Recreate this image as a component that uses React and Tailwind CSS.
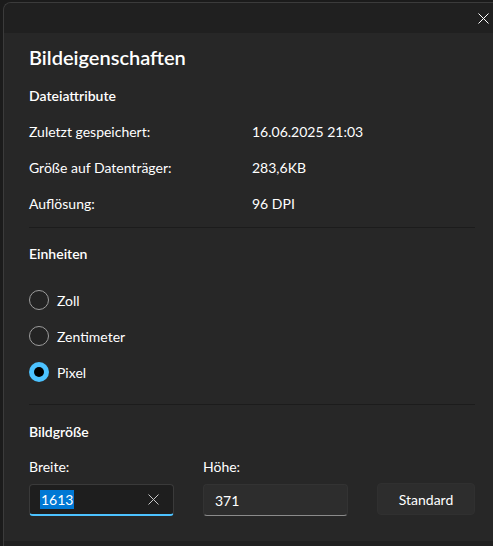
import React from 'react';

const attributes = [
  { label: 'Zuletzt gespeichert:', value: '16.06.2025 21:03' },
  { label: 'Größe auf Datenträger:', value: '283,6KB' },
  { label: 'Auflösung:', value: '96 DPI' },
];

const units = ['Zoll', 'Zentimeter', 'Pixel'];

const Radio = ({ label, checked }) => (
  <div className="flex items-center h-[36px] gap-[8px]">
    {checked ? (
      <span className="w-[20px] h-[20px] rounded-full bg-[#4cc2ff] flex items-center justify-center">
        <span className="w-[10px] h-[10px] rounded-full bg-black" />
      </span>
    ) : (
      <span className="w-[20px] h-[20px] rounded-full border border-[#9d9d9d] bg-[#232323]" />
    )}
    <span className="text-[14px] text-white">{label}</span>
  </div>
);

const App = () => {
  return (
    <div className="w-[493px] h-[546px] bg-[#1b1b1b] overflow-hidden font-['Lato',sans-serif] pt-[2px] pl-[3px]">
      {/* Dialogfenster */}
      <div className="w-[490px] h-[544px] rounded-tl-[8px] border-l border-t border-[#3b3b3b] bg-[#272727] overflow-hidden flex flex-col">
        {/* Titelleiste */}
        <div className="h-[30px] shrink-0 bg-[#202020] flex items-center justify-end pr-[4px]">
          <svg width="11" height="11" viewBox="0 0 11 11" className="text-white">
            <path d="M0.5 0.5L10.5 10.5M10.5 0.5L0.5 10.5" stroke="currentColor" strokeWidth="1" />
          </svg>
        </div>

        <div className="pl-[25px] w-[471px] flex flex-col">
          <h1 className="mt-[10px] h-[28px] leading-[28px] text-[20px] font-semibold text-white">Bildeigenschaften</h1>

          {/* Dateiattribute */}
          <h2 className="mt-[15px] h-[20px] leading-[20px] text-[14px] font-semibold text-white">Dateiattribute</h2>
          <div className="mt-[7px] flex flex-col">
            {attributes.map((a) => (
              <div key={a.label} className="flex items-center h-[36px] text-[14px] text-white">
                <span className="w-[223px]">{a.label}</span>
                <span>{a.value}</span>
              </div>
            ))}
          </div>

          <div className="mt-[6px] h-px bg-[#1c1c1c]" />

          {/* Einheiten */}
          <h2 className="mt-[16px] h-[20px] leading-[20px] text-[14px] font-semibold text-white">Einheiten</h2>
          <div className="mt-[18px] flex flex-col">
            {units.map((u) => (
              <Radio key={u} label={u} checked={u === 'Pixel'} />
            ))}
          </div>

          <div className="mt-[14px] h-px bg-[#1c1c1c]" />

          {/* Bildgröße */}
          <h2 className="mt-[17px] h-[20px] leading-[20px] text-[14px] font-semibold text-white">Bildgröße</h2>
          <div className="mt-[15px] flex items-end">
            <div className="w-[174px] flex flex-col">
              <span className="h-[20px] leading-[20px] text-[14px] text-white">Breite:</span>
              <div className="mt-[7px] w-[145px] h-[32px] rounded-[4px] border border-[#3a3a3a] border-b-2 border-b-[#4cc2ff] bg-[#1e1e1e] flex items-center pl-[10px] pr-[14px]">
                <span className="bg-[#0078d4] text-white text-[14px] leading-[19px] px-px">1613</span>
                <svg width="11" height="11" viewBox="0 0 11 11" className="ml-auto text-[#c8c8c8]">
                  <path d="M0.5 0.5L10.5 10.5M10.5 0.5L0.5 10.5" stroke="currentColor" strokeWidth="1" />
                </svg>
              </div>
            </div>
            <div className="w-[174px] flex flex-col">
              <span className="h-[20px] leading-[20px] text-[14px] text-white">Höhe:</span>
              <div className="mt-[7px] w-[145px] h-[32px] rounded-[4px] border border-[#333333] border-b-[#8b8b8b] bg-[#2d2d2d] flex items-center pl-[11px]">
                <span className="text-white text-[14px]">371</span>
              </div>
            </div>
            <button className="mb-px w-[98px] h-[32px] rounded-[4px] bg-[#2d2d2d] border border-[#303030] text-white text-[14px]">
              Standard
            </button>
          </div>
        </div>

        <div className="mt-auto h-[5px] bg-[#202020]" />
      </div>
    </div>
  );
};

export default App;
